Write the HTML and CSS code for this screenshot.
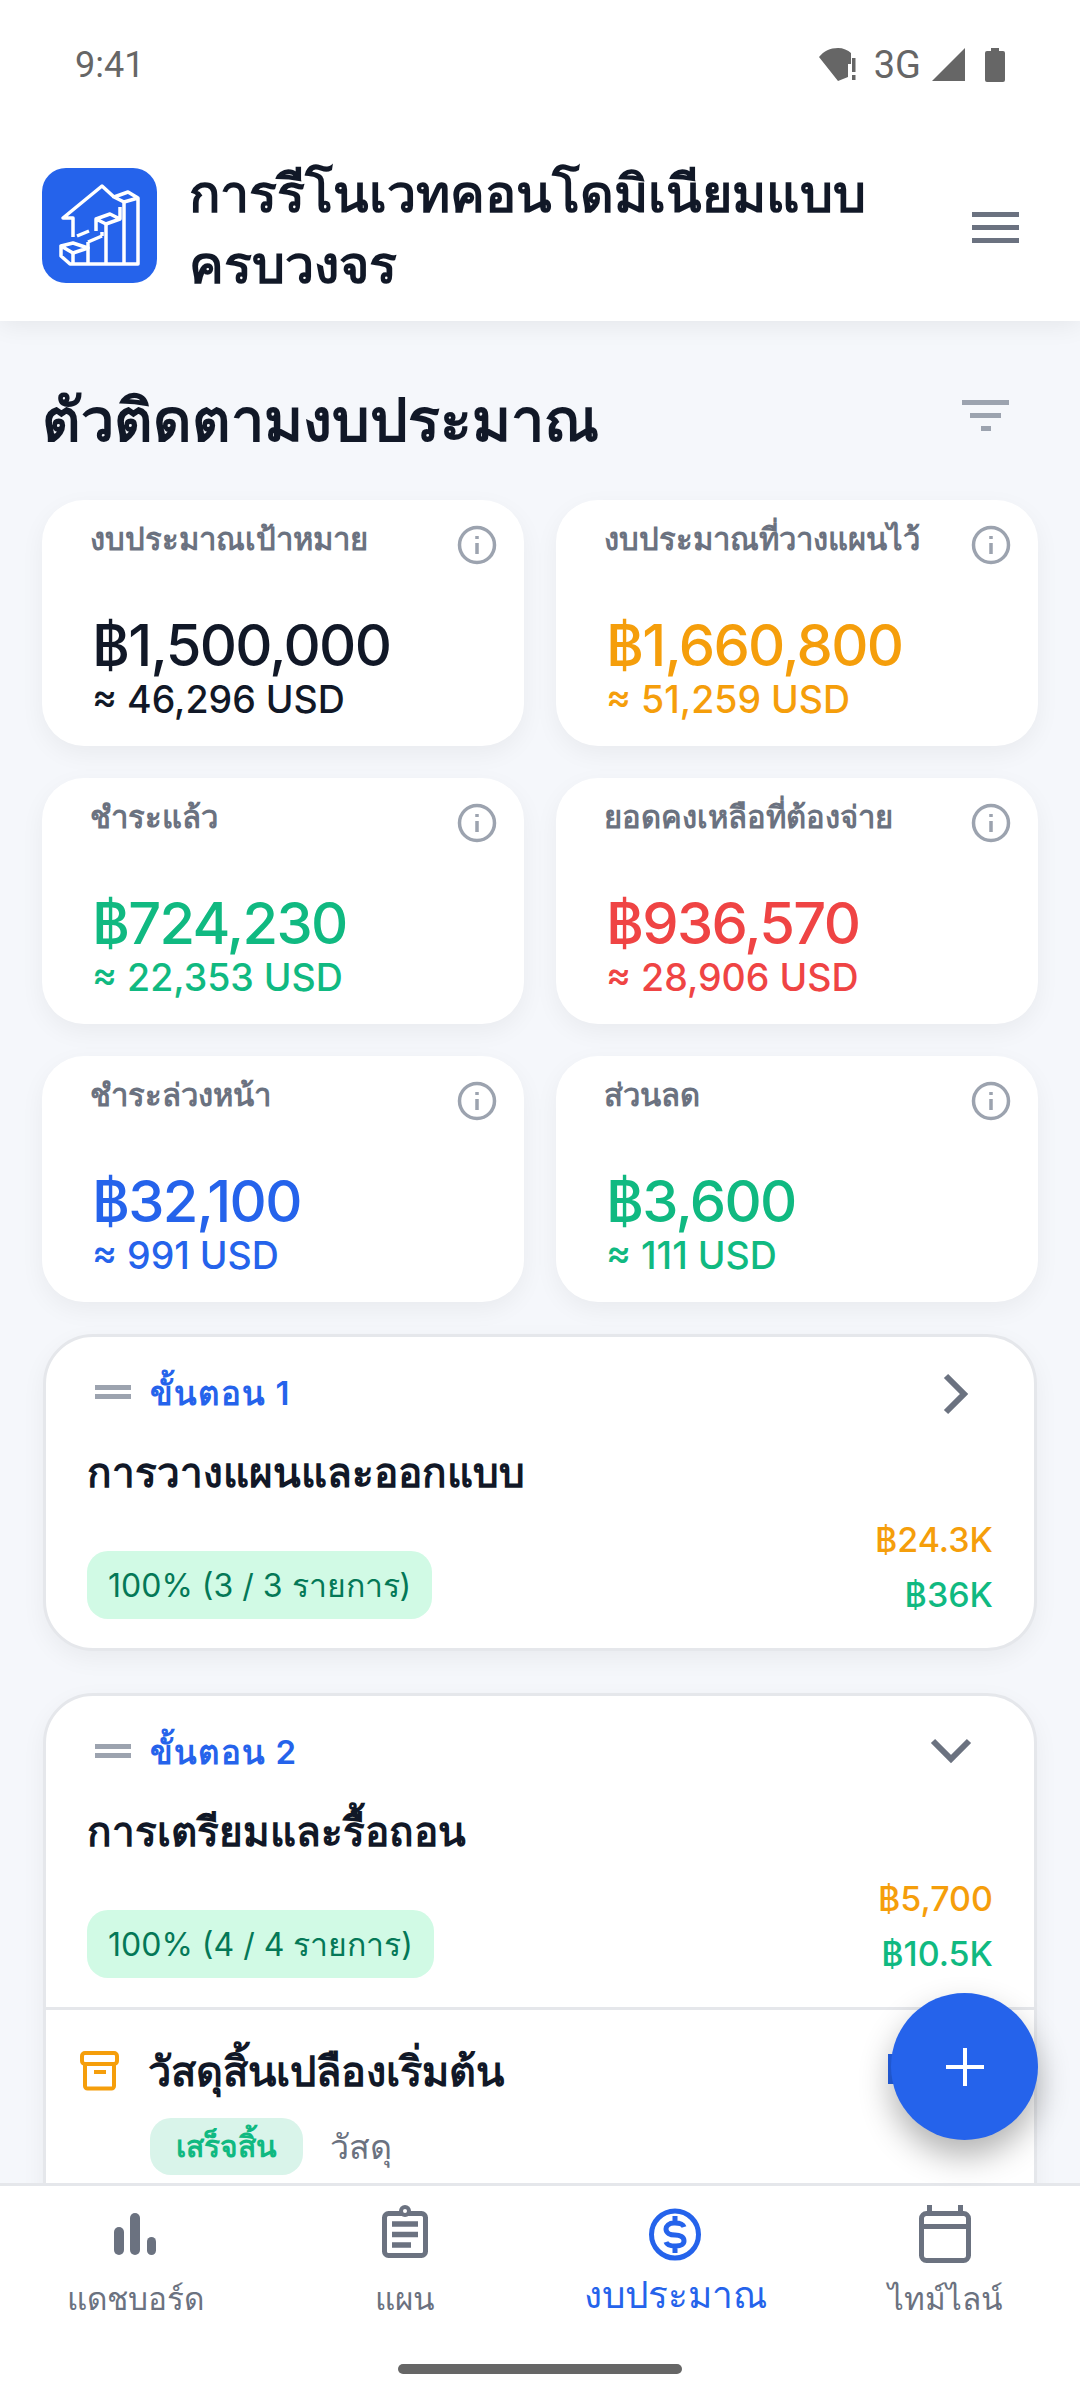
FILE: index.html
```html
<!DOCTYPE html>
<html lang="th">
<head>
  <meta charset="UTF-8" />
  <meta name="viewport" content="width=device-width, initial-scale=1.0"/>
  <title>Budget Tracker</title>
  <link rel="stylesheet" href="styles.css">
</head>
<body>
  <div class="app">
    <div class="topbar">
      <div class="status">
        <span class="time">9:41</span>
        <div class="status-icons">
          <svg class="wifi" width="38" height="34" viewBox="0 0 38 34"><path d="M0 9C5 3 11 0 19 0c5 0 10 2 13 5v11h-3v13l-10 4z" fill="#666"/><path d="M33 10h3.500v14H33zM33 27h3.500v5H33z" fill="#666"/></svg>
          <span class="net">3G</span>
          <svg width="34" height="34" viewBox="0 0 34 34"><path d="M0 33L33 0v33z" fill="#666"/></svg>
          <svg class="battery" width="20" height="34" viewBox="0 0 20 34"><path d="M6 0h8v3h4a2 2 0 0 1 2 2v27a2 2 0 0 1-2 2H2a2 2 0 0 1-2-2V5a2 2 0 0 1 2-2h4z" fill="#666"/></svg>
        </div>
      </div>
      <div class="header">
        <div class="logo">
          <svg width="115" height="115" viewBox="0 0 115 115" fill="none" stroke="#fff" stroke-width="3.500" stroke-linejoin="round">
            <path d="M31 69V50H21L60 18l12 11"/>
            <path d="M19 78l12-3 15 5-15 5zM19 78v10l9 8h68V30L82 34l-10-5 14-5 10 6"/>
            <path d="M31 85v11M46 80v16M64 56v40M82 34v62"/>
            <path d="M35 68l12-5M60 68l-14 6M46 74v6M60 68v-4"/>
            <path d="M54 51l14-5 10 5-14 5zM54 51v12M78 51v-12"/>
          </svg>
        </div>
        <h1 class="app-title">การรีโนเวทคอนโดมิเนียมแบบ<br>ครบวงจร</h1>
        <svg class="menu" width="47" height="31" viewBox="0 0 47 31"><path d="M0 0h47v5H0zM0 13h47v5H0zM0 26h47v5H0z" fill="#6b7280"/></svg>
      </div>
    </div>

    <div class="content">
      <div class="section-head">
        <h2>ตัวติดตามงบประมาณ</h2>
        <svg width="47" height="31" viewBox="0 0 47 31"><path d="M0 0h47v5H0zM8 13h31v5H8zM19 26h10v5H19z" fill="#9ca3af"/></svg>
      </div>

      <div class="cards">
        <div class="card">
          <div class="card-top"><span class="card-label">งบประมาณเป้าหมาย</span><svg class="info" viewBox="0 0 40 40"><circle cx="20" cy="20" r="17.500"/><path d="M20 18v11M20 11v3"/></svg></div>
          <div class="card-value dark">฿1,500,000</div>
          <div class="card-usd dark">≈ 46,296 USD</div>
        </div>
        <div class="card">
          <div class="card-top"><span class="card-label">งบประมาณที่วางแผนไว้</span><svg class="info" viewBox="0 0 40 40"><circle cx="20" cy="20" r="17.500"/><path d="M20 18v11M20 11v3"/></svg></div>
          <div class="card-value orange">฿1,660,800</div>
          <div class="card-usd orange">≈ 51,259 USD</div>
        </div>
        <div class="card">
          <div class="card-top"><span class="card-label">ชำระแล้ว</span><svg class="info" viewBox="0 0 40 40"><circle cx="20" cy="20" r="17.500"/><path d="M20 18v11M20 11v3"/></svg></div>
          <div class="card-value green">฿724,230</div>
          <div class="card-usd green">≈ 22,353 USD</div>
        </div>
        <div class="card">
          <div class="card-top"><span class="card-label">ยอดคงเหลือที่ต้องจ่าย</span><svg class="info" viewBox="0 0 40 40"><circle cx="20" cy="20" r="17.500"/><path d="M20 18v11M20 11v3"/></svg></div>
          <div class="card-value red">฿936,570</div>
          <div class="card-usd red">≈ 28,906 USD</div>
        </div>
        <div class="card">
          <div class="card-top"><span class="card-label">ชำระล่วงหน้า</span><svg class="info" viewBox="0 0 40 40"><circle cx="20" cy="20" r="17.500"/><path d="M20 18v11M20 11v3"/></svg></div>
          <div class="card-value blue">฿32,100</div>
          <div class="card-usd blue">≈ 991 USD</div>
        </div>
        <div class="card">
          <div class="card-top"><span class="card-label">ส่วนลด</span><svg class="info" viewBox="0 0 40 40"><circle cx="20" cy="20" r="17.500"/><path d="M20 18v11M20 11v3"/></svg></div>
          <div class="card-value green">฿3,600</div>
          <div class="card-usd green">≈ 111 USD</div>
        </div>
      </div>

      <div class="stage">
        <div class="stage-main">
          <div class="stage-top">
            <svg width="36" height="14" viewBox="0 0 36 14"><path d="M0 0h36v5H0zM0 9h36v5H0z" fill="#9ca3af"/></svg>
            <span class="stage-step">ขั้นตอน 1</span>
            <svg class="chev chev-right" width="28" height="42" viewBox="0 0 28 42" fill="none" stroke="#6b7280" stroke-width="6"><path d="M4 3l18 18L4 39"/></svg>
          </div>
          <div class="stage-title">การวางแผนและออกแบบ</div>
          <div class="stage-foot">
            <span class="pill">100% (3 / 3 รายการ)</span>
            <div class="amounts"><span class="orange">฿24.3K</span><span class="green">฿36K</span></div>
          </div>
        </div>
      </div>

      <div class="stage">
        <div class="stage-main">
          <div class="stage-top">
            <svg width="36" height="14" viewBox="0 0 36 14"><path d="M0 0h36v5H0zM0 9h36v5H0z" fill="#9ca3af"/></svg>
            <span class="stage-step">ขั้นตอน 2</span>
            <svg class="chev" width="42" height="28" viewBox="0 0 42 28" fill="none" stroke="#6b7280" stroke-width="6"><path d="M3 4l18 18L39 4"/></svg>
          </div>
          <div class="stage-title">การเตรียมและรื้อถอน</div>
          <div class="stage-foot">
            <span class="pill">100% (4 / 4 รายการ)</span>
            <div class="amounts"><span class="orange">฿5,700</span><span class="green">฿10.5K</span></div>
          </div>
        </div>
        <div class="item">
          <div class="item-row">
            <svg class="item-icon" width="40" height="40" viewBox="0 0 40 40" fill="none" stroke="#f59e0b" stroke-width="4"><rect x="2" y="2" width="35" height="11" rx="3"/><path d="M5 13v22a2.500 2.500 0 0 0 2.500 2.500h24a2.500 2.500 0 0 0 2.500-2.500V13M14 21h12"/></svg>
            <span class="item-title">วัสดุสิ้นเปลืองเริ่มต้น</span>
            <span class="item-amount"></span>
          </div>
          <div class="item-meta"><span class="done">เสร็จสิ้น</span><span class="kind">วัสดุ</span></div>
        </div>
      </div>
    </div>

    <button class="fab"><svg width="38" height="38" viewBox="0 0 38 38"><path d="M17 0h4v17h17v4H21v17h-4V21H0v-4h17z" fill="#fff"/></svg></button>

    <div class="nav">
      <div class="tab">
        <svg width="54" height="60" viewBox="0 0 54 60" fill="#6b7280"><rect x="6" y="24" width="10" height="28" rx="5"/><rect x="22" y="10" width="10" height="42" rx="5"/><rect x="39" y="34" width="9" height="18" rx="4.500"/></svg>
        <span>แดชบอร์ด</span>
      </div>
      <div class="tab">
        <svg width="54" height="60" viewBox="0 0 54 60" fill="none" stroke="#6b7280" stroke-width="5"><rect x="6.500" y="10.500" width="41" height="42" rx="4"/><path d="M14 21h26M14 31.500h26M14 42h19" stroke-width="5.500"/><circle cx="27" cy="8" r="6" fill="#6b7280" stroke="none"/><circle cx="27" cy="8" r="2" fill="#fff" stroke="none"/></svg>
        <span>แผน</span>
      </div>
      <div class="tab active">
        <svg width="54" height="60" viewBox="0 0 54 60" fill="none" stroke="#2563eb" stroke-width="5"><circle cx="27" cy="31.500" r="23.500"/><path d="M36 24c-1-3-5-4-9-4h-1c-5 0-8 3-8 6 0 4 4 6 9 6s9 2 9 6c0 3-3 5-8 5h-1c-4 0-8-1-9-4M27 13v7M27 43v7"/></svg>
        <span>งบประมาณ</span>
      </div>
      <div class="tab">
        <svg width="54" height="60" viewBox="0 0 54 60" fill="none" stroke="#6b7280" stroke-width="5"><rect x="3.500" y="10.500" width="47" height="47" rx="5"/><path d="M3.500 23.500h47M11.500 2v9M42.500 2v9"/></svg>
        <span>ไทม์ไลน์</span>
      </div>
    </div>
    <div class="home-bar"></div>
  </div>
</body>
</html>
```

FILE: styles.css
```css
* {
  box-sizing: border-box;
}

body {
  margin: 0;
  font-family: Inter, "Noto Sans", sans-serif;
  background: #f5f7fb;
}

.app {
  position: relative;
  width: 1080px;
  height: 2400px;
  overflow: hidden;
  display: flex;
  flex-direction: column;
}

.topbar {
  height: 321px;
  flex-shrink: 0;
  background: #fff;
  box-shadow: 0 4px 24px rgba(0, 0, 0, 0.07);
  position: relative;
  z-index: 2;
}

.status {
  height: 130px;
  padding: 0 75px 0 75px;
  display: flex;
  justify-content: space-between;
  align-items: center;
  color: #666;
  font-family: Roboto, sans-serif;
}

.time {
  font-size: 36px;
}

.status-icons {
  display: flex;
  align-items: center;
  gap: 11px;
}

.net {
  font-size: 38px;
  margin-left: 6px;
}

.battery {
  margin-left: 8px;
}

.header {
  display: flex;
  align-items: center;
  padding: 0 61px 0 42px;
  height: 191px;
}

.logo {
  width: 115px;
  height: 115px;
  border-radius: 24px;
  background: #2563eb;
  flex-shrink: 0;
}

.logo svg {
  display: block;
}

.app-title {
  flex: 1;
  margin: 7px 0 0 32px;
  font-size: 52px;
  line-height: 71px;
  font-weight: 700;
  color: #111827;
  white-space: nowrap;
}

.menu {
  margin-top: 3px;
}

.content {
  flex: 1;
  min-height: 0;
  overflow: hidden;
  padding: 0 42px;
}

.section-head {
  height: 179px;
  display: flex;
  justify-content: space-between;
  align-items: center;
  padding-right: 29px;
}

.section-head h2 {
  margin: 18px 0 0;
  font-size: 59.300px;
  font-weight: 700;
  color: #111827;
}

.section-head svg {
  margin-top: 10px;
}

.cards {
  display: grid;
  grid-template-columns: repeat(2, 1fr);
  gap: 32px;
}

.card {
  height: 246px;
  padding: 20px 42px 0 50px;
  background: #fff;
  border-radius: 42px;
  box-shadow: 0 8px 24px rgba(0, 0, 0, 0.05);
}

.card-top {
  height: 67px;
  display: flex;
  justify-content: space-between;
}

.card-label {
  font-size: 31px;
  font-weight: 600;
  color: #6b7280;
  line-height: 38px;
  margin-left: -2px;
  white-space: nowrap;
}

.info {
  width: 40px;
  height: 40px;
  margin: 5px -15px 0 0;
  fill: none;
  stroke: #9ca3af;
  stroke-width: 3.500;
  flex-shrink: 0;
}

.card-value {
  margin-top: 23px;
  font-size: 57.750px;
  line-height: 70px;
  font-weight: 500;
  letter-spacing: -1.700px;
}

.card-usd {
  font-size: 37.500px;
  line-height: 40px;
  font-weight: 500;
}

.dark { color: #111827; }
.orange { color: #f59e0b; }
.green { color: #10b981; }
.red { color: #ef4444; }
.blue { color: #2563eb; }

.stage {
  margin: 32px 1px 42px;
  background: #fff;
  border: 3px solid #e5e7eb;
  border-radius: 50px;
  box-shadow: 0 8px 24px rgba(0, 0, 0, 0.05);
}

.stage-main {
  padding: 26px 41px 26px 41px;
}

.stage + .stage {
  margin-top: 0;
}

.stage-top {
  display: flex;
  align-items: center;
  height: 58px;
  padding-left: 8px;
}

.stage-step {
  flex: 1;
  margin: 2px 0 0 19px;
  font-size: 33px;
  font-weight: 600;
  letter-spacing: 1.200px;
  color: #2563eb;
}

.chev {
  margin-right: 21px;
}

.chev-right {
  margin: 4px 23px 0 0;
}

.stage-title {
  margin-top: 22px;
  font-size: 40.500px;
  line-height: 60px;
  font-weight: 700;
  color: #111827;
}

.stage-foot {
  display: flex;
  justify-content: space-between;
  align-items: flex-end;
  margin-top: 9px;
}

.pill {
  height: 68px;
  display: flex;
  align-items: center;
  padding: 0 21px;
  margin-bottom: 3px;
  background: #d1fae5;
  border-radius: 21px;
  font-size: 32px;
  color: #047857;
}

.amounts {
  display: flex;
  flex-direction: column;
  align-items: flex-end;
  font-size: 34px;
  line-height: 55px;
  font-weight: 500;
}

.item {
  border-top: 3px solid #e5e7eb;
  padding: 31px 34px 300px 34px;
}

.item-row {
  display: flex;
  align-items: center;
  position: relative;
}

.item-title {
  margin-left: 28px;
  font-size: 41.500px;
  line-height: 60px;
  font-weight: 600;
  color: #111827;
}

.item-amount {
  position: absolute;
  left: 808px;
  top: 13px;
  width: 20px;
  height: 30px;
  background: #2563eb;
}

.item-meta {
  display: flex;
  align-items: center;
  margin: 17px 0 0 70px;
}

.done {
  height: 57px;
  width: 153px;
  display: flex;
  align-items: center;
  justify-content: center;
  border-radius: 21px;
  background: #d9f4ea;
  color: #10b981;
  font-size: 30px;
  font-weight: 600;
}

.kind {
  margin-left: 27px;
  font-size: 34px;
  color: #6b7280;
}

.fab {
  position: absolute;
  left: 891px;
  top: 1993px;
  width: 147px;
  height: 147px;
  border: none;
  border-radius: 50%;
  background: #2563eb;
  box-shadow: 0 16px 32px rgba(0, 0, 0, 0.3);
  display: flex;
  align-items: center;
  justify-content: center;
  padding: 0;
  z-index: 3;
}

.nav {
  height: 217px;
  flex-shrink: 0;
  background: #fff;
  border-top: 3px solid #e5e7eb;
  display: grid;
  grid-template-columns: repeat(4, 270px);
  padding-top: 17px;
  position: relative;
  z-index: 2;
}

.tab {
  display: flex;
  flex-direction: column;
  align-items: center;
  color: #6b7280;
  font-size: 31.500px;
  line-height: 46px;
}

.tab svg {
  margin-bottom: 13px;
}

.tab.active {
  color: #2563eb;
  font-size: 37px;
}

.tab.active span {
  margin-top: -4px;
}

.home-bar {
  position: absolute;
  left: 398px;
  top: 2364px;
  width: 284px;
  height: 10px;
  border-radius: 5px;
  background: #666;
  z-index: 3;
}
```
